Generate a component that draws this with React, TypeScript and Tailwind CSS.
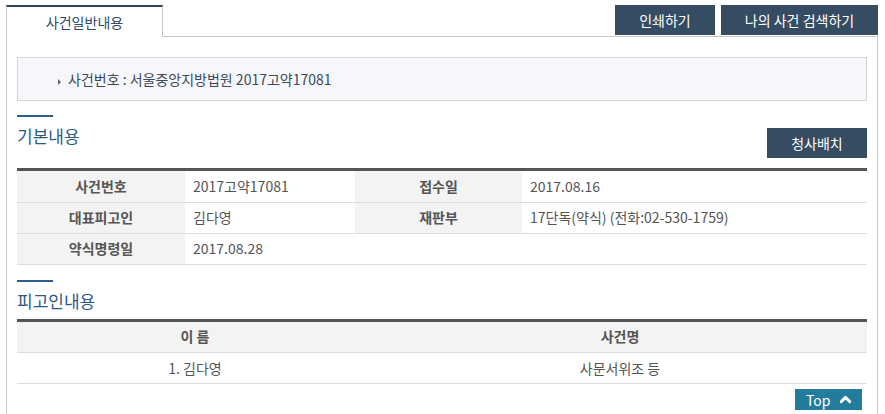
import { ChevronUp } from 'lucide-react'

const labelCls = 'bg-[#f3f3f3] text-center font-bold text-[#555]'
const valueCls = 'pl-[8px] text-[#555]'

function SectionTitle({ title, action }: { title: string; action?: string }) {
  return (
    <div>
      <div className="w-[36px] h-[2px] bg-[#2d5f8e]" />
      <div className="flex items-start justify-between">
        <h2 className="mt-[7px] text-[17px] leading-[24px] text-[#2a5a88]">{title}</h2>
        {action && (
          <button className="mt-[11px] w-[100px] h-[30px] bg-[#354c63] text-white text-[14px]">{action}</button>
        )}
      </div>
    </div>
  )
}

export default function App() {
  return (
    <div
      className="w-[885px] h-[414px] overflow-hidden bg-white pl-[6px] pr-[7px] pt-[5px]"
      style={{ fontFamily: '"Noto Sans CJK KR", "Noto Sans", sans-serif' }}
    >
      {/* Tabs + top buttons */}
      <div className="flex">
        <div className="w-[157px] h-[32px] border-t-2 border-l border-r border-t-[#2f4559] border-l-[#c8c8c8] border-r-[#c8c8c8] flex items-center justify-center text-[14px] text-[#2e4a6a]">
          사건일반내용
        </div>
        <div className="flex-1 h-[32px] border-b border-[#c8c8c8] flex justify-end items-start gap-[6px]">
          <button className="w-[100px] h-[30px] bg-[#354c63] text-white text-[14px]">인쇄하기</button>
          <button className="w-[157px] h-[30px] bg-[#354c63] text-white text-[14px]">나의 사건 검색하기</button>
        </div>
      </div>

      {/* Body */}
      <div className="h-[400px] border-l border-r border-[#c8c8c8] px-[10px] pt-[20px]">
        <div className="h-[44px] border border-[#d5d5d5] bg-[#f6f7fb] flex items-center pl-[40px] text-[14px] text-[#3c4a5a]">
          <span className="mr-[7px] mt-[5px] w-0 h-0 border-y-[3px] border-y-transparent border-l-[3px] border-l-[#666]" />
          사건번호 : 서울중앙지방법원 2017고약17081
        </div>

        <div className="mt-[14px]">
          <SectionTitle title="기본내용" action="청사배치" />
        </div>

        <div className="mt-[10px] h-[3px] bg-[#555]" />
        <table className="w-full text-[14px] border-collapse">
          <colgroup>
            <col className="w-[168px]" />
            <col className="w-[170px]" />
            <col className="w-[167px]" />
            <col />
          </colgroup>
          <tbody>
            <tr className="h-[31px] border-b border-[#dddddd]">
              <th className={labelCls}>사건번호</th>
              <td className={valueCls}>2017고약17081</td>
              <th className={labelCls}>접수일</th>
              <td className={valueCls}>2017.08.16</td>
            </tr>
            <tr className="h-[31px] border-b border-[#dddddd]">
              <th className={labelCls}>대표피고인</th>
              <td className={valueCls}>김다영</td>
              <th className={labelCls}>재판부</th>
              <td className={valueCls}>17단독(약식) (전화:02-530-1759)</td>
            </tr>
            <tr className="h-[31px] border-b border-[#dddddd]">
              <th className={labelCls}>약식명령일</th>
              <td className={valueCls} colSpan={3}>2017.08.28</td>
            </tr>
          </tbody>
        </table>

        <div className="mt-[15px]">
          <SectionTitle title="피고인내용" />
        </div>

        <div className="mt-[6px] h-[3px] bg-[#555]" />
        <table className="w-full text-[14px] border-collapse">
          <colgroup>
            <col className="w-[356px]" />
            <col />
          </colgroup>
          <thead>
            <tr className="h-[31px] border-b border-[#dddddd] bg-[#f3f3f3]">
              <th className="text-center font-bold text-[#555]">이 름</th>
              <th className="text-center font-bold text-[#555]">사건명</th>
            </tr>
          </thead>
          <tbody>
            <tr className="h-[31px] border-b border-[#dddddd]">
              <td className="text-center text-[#555]">1. 김다영</td>
              <td className="text-center text-[#555]">사문서위조 등</td>
            </tr>
          </tbody>
        </table>

        <div className="flex justify-end pr-[5px] mt-[5px]">
          <button className="w-[67px] h-[21px] bg-[#237c9c] text-white text-[14px] flex items-center justify-between pl-[11px] pr-[8px]">
            <span className="leading-none">Top</span>
            <ChevronUp size={17} strokeWidth={4} />
          </button>
        </div>
      </div>
    </div>
  )
}
